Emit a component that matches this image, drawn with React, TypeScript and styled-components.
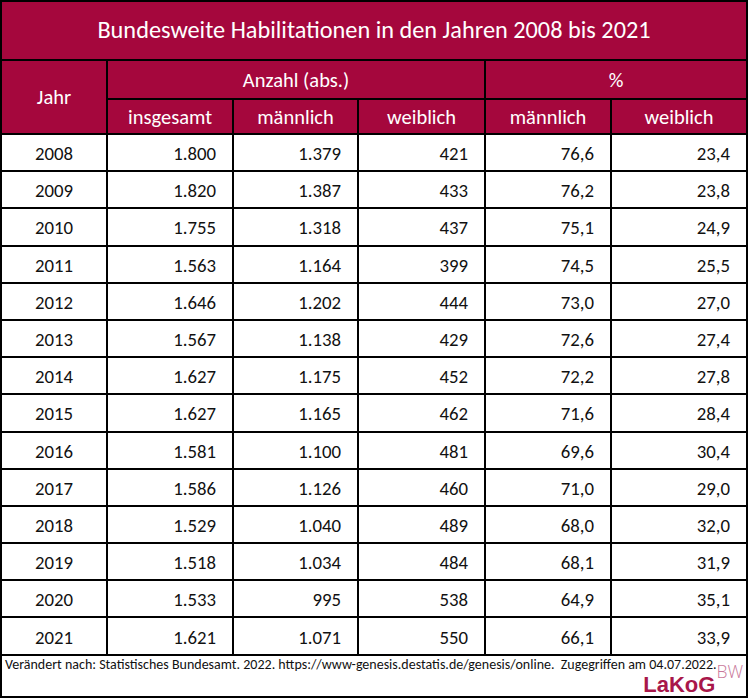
import React from "react";
import styled, { createGlobalStyle } from "styled-components";

const Global = createGlobalStyle`
  html, body { margin: 0; padding: 0; background: #fff; }
  body { font-family: Carlito, Lato, "Liberation Sans", sans-serif; }
`;

const CRIMSON = "#a5073d";

const Grid = styled.div`
  display: grid;
  grid-template-columns: 104px 124px 123px 125px 124px 134px;
  grid-template-rows: 57px 37px 33px repeat(14, 35.2px) 40px;
  gap: 2px;
  padding: 2px;
  width: 744px;
  background: #000;
`;

const Title = styled.div`
  grid-column: 1 / -1;
  background: ${CRIMSON};
  color: #fff;
  font-size: 24.3px;
  display: flex;
  align-items: center;
  justify-content: center;
  padding-bottom: 2px;
  box-sizing: border-box;
`;

const HeadCell = styled.div<{ $col?: string; $row?: string }>`
  background: ${CRIMSON};
  color: #fff;
  font-size: 20.5px;
  display: flex;
  align-items: center;
  justify-content: center;
  ${(p) => (p.$col ? `grid-column: ${p.$col};` : "")}
  ${(p) => (p.$row ? `grid-row: ${p.$row};` : "")}
`;

const Cell = styled.div<{ $center?: boolean }>`
  background: #fff;
  color: #111;
  font-size: 18.8px;
  display: flex;
  align-items: center;
  justify-content: ${(p) => (p.$center ? "center" : "flex-end")};
  padding-right: ${(p) => (p.$center ? "0" : "16px")};
  padding-top: 2px;
  box-sizing: border-box;
`;

const Footer = styled.div`
  grid-column: 1 / -1;
  background: #fff;
  display: flex;
  flex-direction: column;
  padding: 0 3px 0;
`;

const Source = styled.div`
  align-self: flex-start;
  font-size: 14px;
  line-height: 17px;
  color: #111;
  white-space: nowrap;
`;

const Logo = styled.div`
  align-self: flex-end;
  display: flex;
  align-items: flex-start;
  margin-top: 2px;
`;

const LogoMain = styled.span`
  font-family: "Liberation Sans", Arial, sans-serif;
  font-weight: 700;
  font-size: 22px;
  line-height: 20px;
  color: #a8174a;
`;

const LogoSup = styled.span`
  font-family: "Open Sans", sans-serif;
  font-weight: 300;
  font-size: 17.5px;
  line-height: 14px;
  color: #c9789a;
  margin-top: -11px;
  margin-left: 1px;
`;

const rows: [string, string, string, string, string, string][] = [
  ["2008", "1.800", "1.379", "421", "76,6", "23,4"],
  ["2009", "1.820", "1.387", "433", "76,2", "23,8"],
  ["2010", "1.755", "1.318", "437", "75,1", "24,9"],
  ["2011", "1.563", "1.164", "399", "74,5", "25,5"],
  ["2012", "1.646", "1.202", "444", "73,0", "27,0"],
  ["2013", "1.567", "1.138", "429", "72,6", "27,4"],
  ["2014", "1.627", "1.175", "452", "72,2", "27,8"],
  ["2015", "1.627", "1.165", "462", "71,6", "28,4"],
  ["2016", "1.581", "1.100", "481", "69,6", "30,4"],
  ["2017", "1.586", "1.126", "460", "71,0", "29,0"],
  ["2018", "1.529", "1.040", "489", "68,0", "32,0"],
  ["2019", "1.518", "1.034", "484", "68,1", "31,9"],
  ["2020", "1.533", "995", "538", "64,9", "35,1"],
  ["2021", "1.621", "1.071", "550", "66,1", "33,9"],
];

export default function App() {
  return (
    <>
      <Global />
      <Grid>
        <Title>Bundesweite Habilitationen in den Jahren 2008 bis 2021</Title>
        <HeadCell $row="2 / 4">Jahr</HeadCell>
        <HeadCell $col="2 / 5">Anzahl (abs.)</HeadCell>
        <HeadCell $col="5 / 7">%</HeadCell>
        <HeadCell>insgesamt</HeadCell>
        <HeadCell>männlich</HeadCell>
        <HeadCell>weiblich</HeadCell>
        <HeadCell>männlich</HeadCell>
        <HeadCell>weiblich</HeadCell>
        {rows.map((r) => (
          <React.Fragment key={r[0]}>
            <Cell $center>{r[0]}</Cell>
            {r.slice(1).map((v, i) => (
              <Cell key={i}>{v}</Cell>
            ))}
          </React.Fragment>
        ))}
        <Footer>
          <Source>
            Verändert nach: Statistisches Bundesamt. 2022. https://www-genesis.destatis.de/genesis/online.&nbsp; Zugegriffen am 04.07.2022.
          </Source>
          <Logo>
            <LogoMain>LaKoG</LogoMain>
            <LogoSup>BW</LogoSup>
          </Logo>
        </Footer>
      </Grid>
    </>
  );
}
